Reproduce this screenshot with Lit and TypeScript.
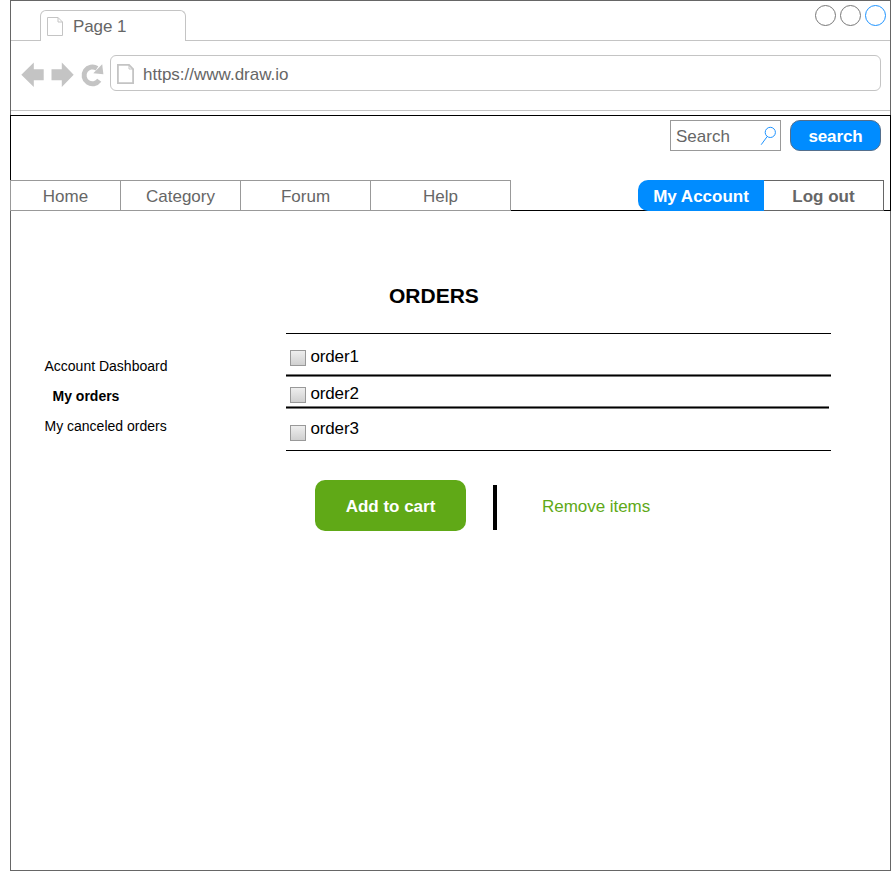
import { LitElement, html, css, svg } from "lit";
import { customElement } from "lit/decorators.js";

const page = (w: number, h: number, sw: number) => svg`
  <path d="M${sw / 2} ${sw / 2}H${w - 5}L${w - sw / 2} 5V${h - sw / 2}H${sw / 2}Z" fill="none" stroke="#c4c4c4" stroke-width=${sw} />
  <path d="M${w - 5} ${sw / 2}V5H${w - sw / 2}" fill="none" stroke="#c4c4c4" stroke-width="1" />`;

@customElement("browser-chrome")
class BrowserChrome extends LitElement {
  static styles = css`
    :host { display: block; color: #666; font-size: 17px; }
    svg { display: block; flex: none; }
    .tabs { display: flex; justify-content: space-between; height: 40px; box-sizing: border-box;
      border-bottom: 1px solid #c4c4c4; padding-left: 29px; }
    .tab { box-sizing: border-box; width: 146px; height: 31px; margin-top: 9px; border: 1px solid #c4c4c4;
      border-bottom: 0; border-radius: 6px 6px 0 0; background: #fff; display: flex; padding: 6px 0 0 6px; }
    .tab span { margin-left: 10px; line-height: 20px; letter-spacing: -0.1px; }
    .controls { display: flex; gap: 4px; padding: 4px 4px 0 0; }
    .dot { box-sizing: border-box; width: 21px; height: 21px; border: 1px solid #777; border-radius: 50%; }
    .active { border-color: #1d93ff; }
    .bar { display: flex; height: 70px; box-sizing: border-box; border-bottom: 1px solid #c4c4c4;
      padding: 14px 9px 0 10px; }
    .tools { margin-top: 6px; margin-right: 6px; }
    .address { flex: 1; box-sizing: border-box; height: 36px; border: 1px solid #c4c4c4; border-radius: 6px;
      display: flex; padding: 8px 0 0 6px; }
    .address span { margin-left: 9px; line-height: 22px; letter-spacing: 0; }
  `;
  render() {
    return html`
      <div class="tabs">
        <div class="tab"><svg width="16" height="19">${page(16, 19, 1)}</svg><span>Page 1</span></div>
        <div class="controls"><i class="dot"></i><i class="dot"></i><i class="dot active"></i></div>
      </div>
      <div class="bar">
        <svg class="tools" width="83" height="28" viewBox="0 0 83 28" fill="#c4c4c4">
          <path d="M0.3 13.8L12.8 1.5V8.3H22.7V19.3H12.8V26Z" />
          <path d="M52.7 13.8L40.8 1.5V8.3H30.5V19.3H40.8V26Z" />
          <path d="M78.3 19.3A8.4 8.4 0 1 1 76 7.3" fill="none" stroke="#c4c4c4" stroke-width="5" />
          <path d="M81.2 3.2L82.4 13.2L72.3 12.3Z" />
        </svg>
        <div class="address"><svg width="17" height="20">${page(17, 20, 1.8)}</svg><span>https://www.draw.io</span></div>
      </div>`;
  }
}

@customElement("site-header")
class SiteHeader extends LitElement {
  static styles = css`
    :host { display: flex; flex-direction: column; justify-content: space-between; box-sizing: border-box;
      height: 96px; border: 1px solid #000; margin: 4px -1px 0; font-size: 17px; line-height: 22px; color: #666; }
    .search { display: flex; justify-content: flex-end; gap: 9px; padding: 4px 9px 0 0; }
    .field { box-sizing: border-box; width: 111px; height: 31px; border: 1px solid #999; display: flex;
      justify-content: space-between; padding: 5px 3px 0 5px; }
    .button { box-sizing: border-box; width: 91px; height: 31px; border: 1px solid #536f8d; border-radius: 10px;
      background: #008cff; color: #fff; font-weight: bold; text-align: center; line-height: 31px; letter-spacing: -0.1px; }
    nav { display: flex; margin: 0 6px -1px -1px; }
    .item { box-sizing: border-box; height: 31px; border: 1px solid #999; border-left-width: 0; background: #fff;
      text-align: center; line-height: 31px; }
    .home { width: 111px; border-left-width: 1px; }
    .category { width: 120px; }
    .forum { width: 130px; }
    .help { width: 140px; }
    .account { width: 126px; height: 31px; margin-left: auto; border-radius: 10px 0 0 10px; background: #008cff;
      color: #fff; font-weight: bold; text-align: center; line-height: 33px; }
    .logout { width: 120px; border-color: #666; font-weight: bold; }
  `;
  render() {
    return html`
      <div class="search">
        <div class="field"><span>Search</span>
          <svg width="17" height="20" fill="none" stroke="#1d93ff">
            <circle cx="10.3" cy="6.4" r="5.1" /><path d="M7.2 10.5L1.2 18.7" />
          </svg>
        </div>
        <div class="button">search</div>
      </div>
      <nav>
        <div class="item home">Home</div><div class="item category">Category</div>
        <div class="item forum">Forum</div><div class="item help">Help</div>
        <div class="account">My Account</div><div class="item logout">Log out</div>
      </nav>`;
  }
}

@customElement("orders-page")
class OrdersPage extends LitElement {
  static styles = css`
    :host { display: flex; color: #000; }
    aside { width: 274px; box-sizing: border-box; padding: 140px 0 0 33.5px; font-size: 14px; line-height: 30px; }
    aside div { white-space: nowrap; }
    .current { font-weight: bold; padding-left: 8px; }
    main { width: 546px; padding-top: 72px; }
    h1 { margin: 0 0 25px; padding-left: 104px; font-size: 21px; line-height: 25px; }
    .list { width: 545px; margin-left: 0.5px; border-top: 1px solid #000; }
    .row { display: flex; box-sizing: border-box; padding-left: 4.5px; font-size: 17px; line-height: 20px;
      letter-spacing: -0.15px; }
    .box { box-sizing: border-box; width: 16px; height: 16px; margin-right: 4.5px; border: 1px solid #999;
      background: linear-gradient(#eee, #d0d0d0); }
    .first { height: 40px; padding-top: 13px; }
    .first .box { margin-top: 3px; }
    .second { height: 29px; padding-top: 7px; }
    .second .box { margin-top: 3px; }
    .third { height: 41px; padding-top: 10px; }
    .third .box { margin-top: 6px; }
    .rule { height: 3px; background: linear-gradient(#777 1px, #000 1px 2px, #777 2px); }
    .short { width: 543px; }
    .end { height: 1px; background: #000; }
    .actions { display: flex; padding: 29px 0 0 30px; font-size: 17px; }
    .add { width: 151px; height: 51px; border-radius: 10px; background: #60a917; color: #fff; font-weight: bold;
      text-align: center; line-height: 53px; }
    .divider { width: 4px; height: 45px; margin: 5px 45px 0 27px; background: #000; }
    .remove { color: #60a917; line-height: 53px; letter-spacing: -0.04px; }
  `;
  render() {
    return html`
      <aside><div>Account Dashboard</div><div class="current">My orders</div><div>My canceled orders</div></aside>
      <main>
        <h1>ORDERS</h1>
        <div class="list">
          <div class="row first"><i class="box"></i>order1</div>
          <div class="rule"></div>
          <div class="row second"><i class="box"></i>order2</div>
          <div class="rule short"></div>
          <div class="row third"><i class="box"></i>order3</div>
          <div class="end"></div>
        </div>
        <div class="actions">
          <div class="add">Add to cart</div><div class="divider"></div><div class="remove">Remove items</div>
        </div>
      </main>`;
  }
}

@customElement("app-root")
class AppRoot extends LitElement {
  static styles = css`
    :host { display: block; width: 891px; height: 871px; box-sizing: border-box; padding-left: 10px;
      background: #fff; font-family: "Liberation Sans", Arial, sans-serif; }
    .frame { box-sizing: border-box; width: 881px; height: 871px; border: 1px solid #666; }
  `;
  render() {
    return html`<div class="frame"><browser-chrome></browser-chrome><site-header></site-header><orders-page></orders-page></div>`;
  }
}
